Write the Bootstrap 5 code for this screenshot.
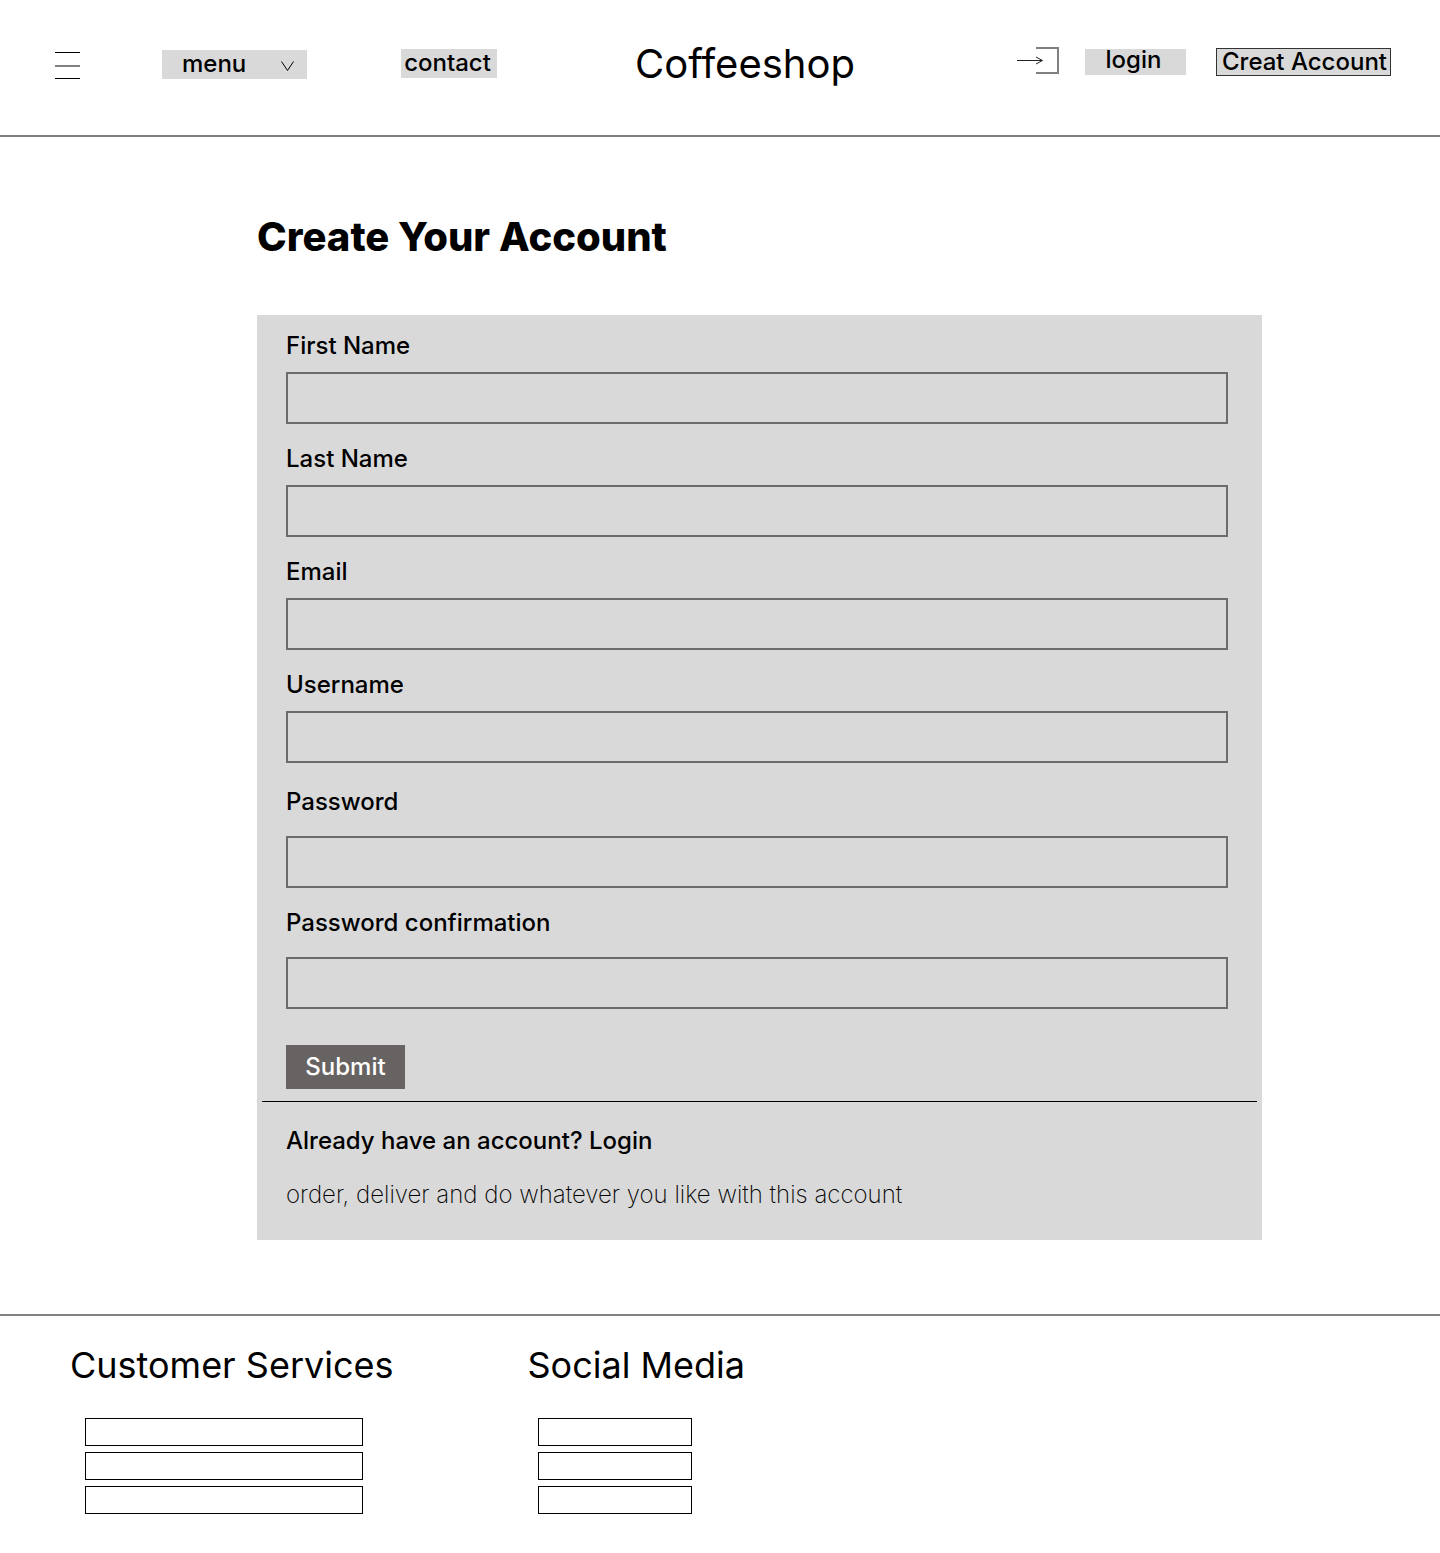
<!DOCTYPE html>
<html lang="en">
<head>
<meta charset="utf-8">
<meta name="viewport" content="width=device-width, initial-scale=1">
<title>Coffeeshop – Create Your Account</title>
<link href="https://cdn.jsdelivr.net/npm/bootstrap@5.3.0/dist/css/bootstrap.min.css" rel="stylesheet">
<style>
  body { font-family: Inter, "Liberation Sans", sans-serif; font-size: 24px; line-height: 30px; font-weight: 500; color: #000; background: #fff; }
  a { color: inherit; text-decoration: none; }
  .site-header { padding: 47px 49px 54px 55px; border-bottom: 2px solid #808080; }
  .icon-btn { padding: 0; border: 0; background: none; line-height: 0; }
  .chip { --bs-btn-color: #000; --bs-btn-hover-color: #000; padding: 0; border: 0; border-radius: 0; background: #d9d9d9; font-size: 24px; font-weight: 500; line-height: 26px; }
  .chip-menu { width: 145px; height: 29px; padding: 0 13px 2px 20px; margin: 3px 0 0 82px; }
  .chip-contact { width: 96px; height: 29px; padding-right: 3px; line-height: 28px; margin: 2px 0 0 94px; }
  .chip-login { width: 101px; height: 26px; padding-right: 4px; line-height: 22px; margin: 2px 30px 0 26px; }
  .chip-account { border: 1px solid #333; height: 28px; padding: 0 3px 0 5px; margin-top: 1px; }
  .brand { font-size: 40px; line-height: 34px; font-weight: 400; margin-left: 138px; }
  .page-main { padding: 76px 178px 74px 257px; }
  .page-title { font-size: 40px; line-height: 48px; font-weight: 800; margin-bottom: 54px; }
  .panel { background: #d9d9d9; padding: 16px 5px 30px; }
  .panel-part { padding: 0 29px 0 24px; }
  .field { margin-bottom: 20px; }
  .field .form-label { display: block; margin-bottom: 11px; }
  .field .form-control { height: 52px; border: 2px solid #6c6c6c; border-radius: 0; background: transparent; }
  .field-pass { padding-top: 4px; }
  .field-pass .form-label, .field-confirm .form-label { margin-bottom: 19px; }
  .btn-send { --bs-btn-color: #fff; --bs-btn-hover-color: #fff; background: #676362; border: 0; border-radius: 0; width: 119px; height: 44px; margin: 36px 0 12px; padding: 0; font-size: 24px; font-weight: 500; }
  .panel hr { margin: 0 0 24px; border-top: 1px solid #000; opacity: 1; }
  .note { font-weight: 200; margin: 24px 0 0; }
  .site-footer { border-top: 2px solid #808080; padding: 28px 70px 39px; gap: 134px; }
  .footer-title { font-size: 36px; line-height: 42px; font-weight: 400; margin-bottom: 32px; }
  .slots { display: grid; gap: 6px; margin: 0; }
  .slots a { display: block; height: 28px; border: 1px solid #000; }
  .slots-services { width: 278px; margin-left: 15px; }
  .slots-social { width: 154px; margin-left: 10px; }
</style>
</head>
<body>
<header class="site-header d-flex align-items-start">
  <button class="icon-btn mt-1" type="button" aria-label="Open navigation">
    <svg width="25" height="29" viewBox="0 0 25 29" aria-hidden="true"><path d="M0 1.5h25M0 27.5h25" stroke="#000"/><path d="M0 15h25" stroke="#808080" stroke-width="2"/></svg>
  </button>
  <button class="btn chip chip-menu d-flex align-items-center justify-content-between" type="button">menu
    <svg width="13" height="10" viewBox="0 0 13 10" class="mt-1" aria-hidden="true"><path d="M.5.5l6 9 6-9" fill="none" stroke="#000"/></svg>
  </button>
  <a class="btn chip chip-contact" href="#">contact</a>
  <a class="brand" href="#">Coffeeshop</a>
  <div class="d-flex align-items-start ms-auto">
    <svg width="42" height="27" viewBox="0 0 42 27" aria-hidden="true"><path d="M19 1h22v25H19" fill="none" stroke="#808080" stroke-width="2"/><path d="M0 13.500h25M19 10l6.500 3.500-6.500 3.500" fill="none" stroke="#222"/></svg>
    <a class="btn chip chip-login" href="#">login</a>
    <a class="btn chip chip-account" href="#">Creat Account</a>
  </div>
</header>

<main class="page-main">
  <h1 class="page-title">Create Your Account</h1>
  <div class="panel">
    <form class="panel-part">
      <div class="field"><label class="form-label" for="first">First Name</label><input class="form-control" id="first" type="text"></div>
      <div class="field"><label class="form-label" for="last">Last Name</label><input class="form-control" id="last" type="text"></div>
      <div class="field"><label class="form-label" for="email">Email</label><input class="form-control" id="email" type="email"></div>
      <div class="field"><label class="form-label" for="user">Username</label><input class="form-control" id="user" type="text"></div>
      <div class="field field-pass"><label class="form-label" for="pass">Password</label><input class="form-control" id="pass" type="password"></div>
      <div class="field field-confirm"><label class="form-label" for="confirm">Password confirmation</label><input class="form-control" id="confirm" type="password"></div>
      <button class="btn btn-send d-block" type="submit">Submit</button>
    </form>
    <hr>
    <div class="panel-part">
      <p class="mb-0">Already have an account? <a href="#">Login</a></p>
      <p class="note">order, deliver and do whatever you like with this account</p>
    </div>
  </div>
</main>

<footer class="site-footer d-flex flex-wrap">
  <section>
    <h2 class="footer-title">Customer Services</h2>
    <ul class="slots slots-services list-unstyled">
      <li><a href="#"></a></li><li><a href="#"></a></li><li><a href="#"></a></li>
    </ul>
  </section>
  <section>
    <h2 class="footer-title">Social Media</h2>
    <ul class="slots slots-social list-unstyled">
      <li><a href="#"></a></li><li><a href="#"></a></li><li><a href="#"></a></li>
    </ul>
  </section>
</footer>
<script src="https://cdn.jsdelivr.net/npm/bootstrap@5.3.0/dist/js/bootstrap.bundle.min.js"></script>
</body>
</html>
